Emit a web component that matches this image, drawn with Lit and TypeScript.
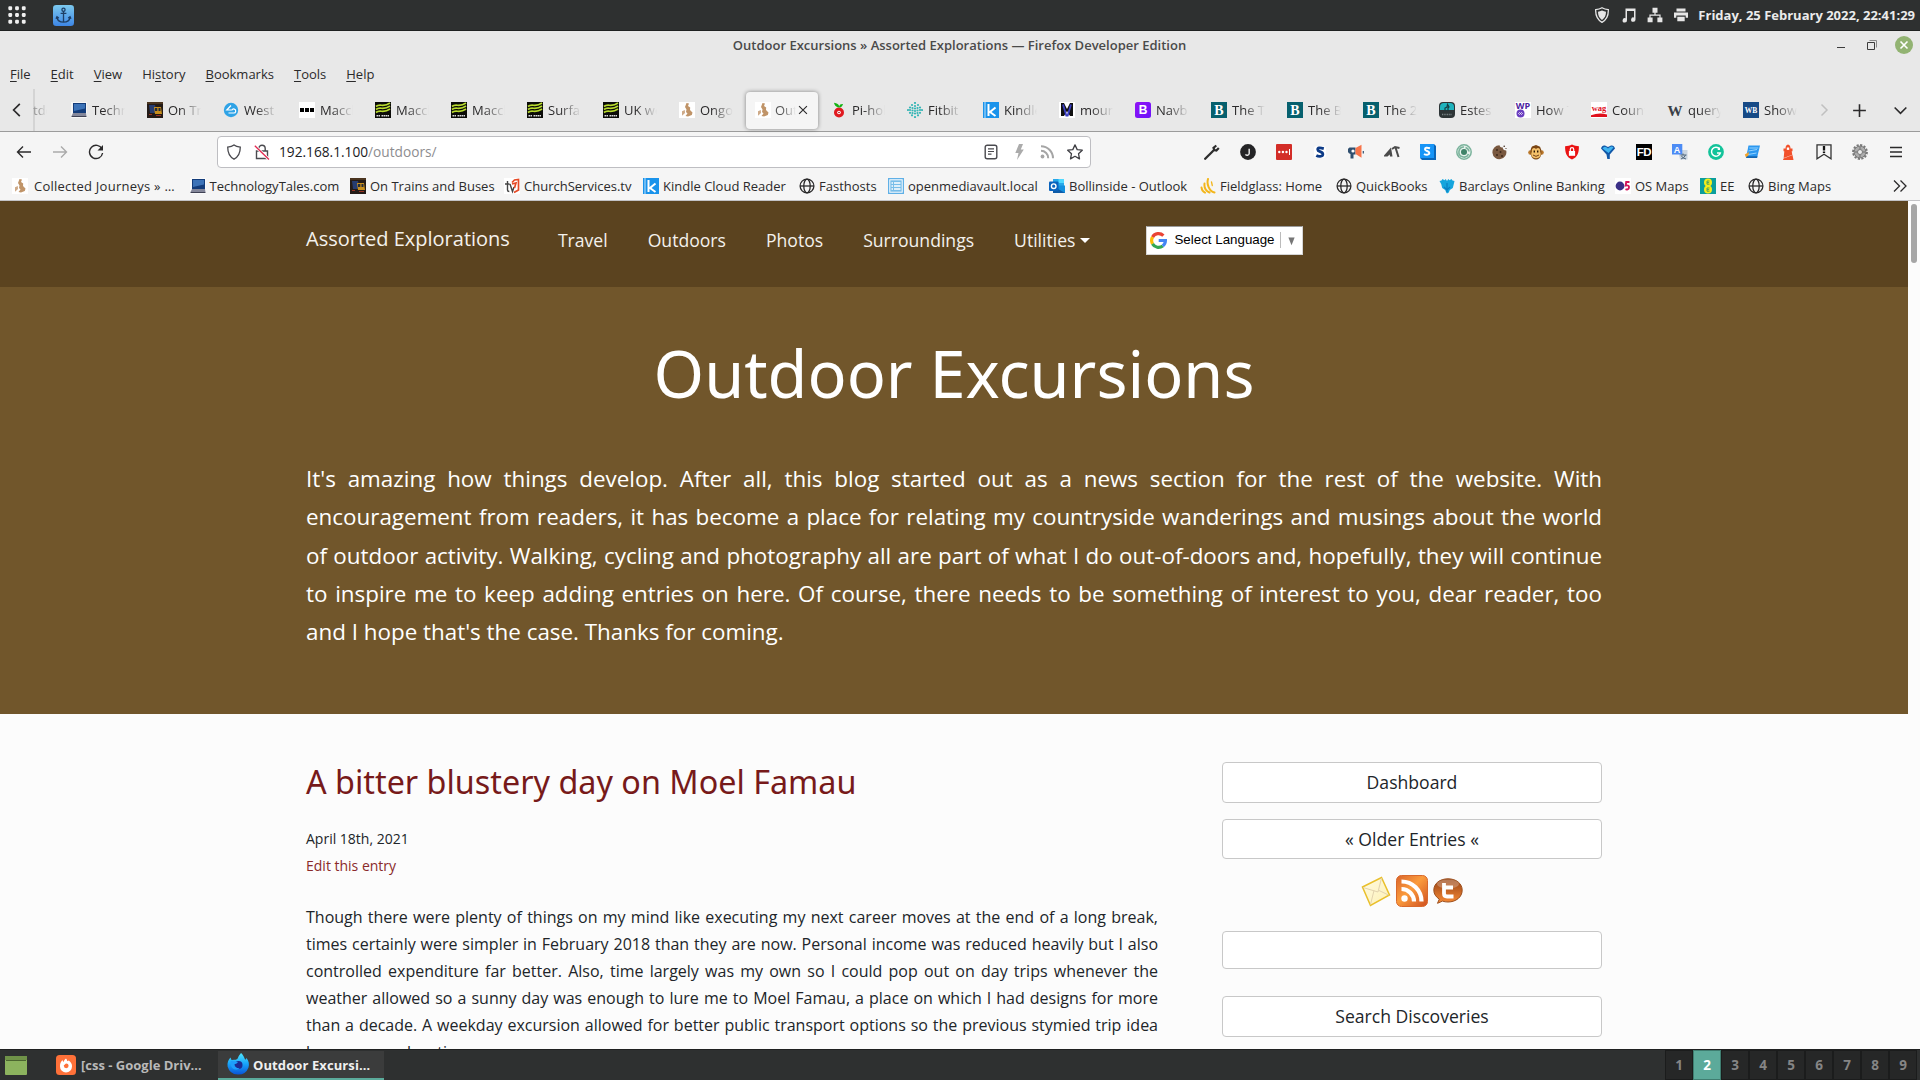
import { LitElement, html, svg, css, TemplateResult, SVGTemplateResult } from "lit";
import { customElement } from "lit/decorators.js";
import { classMap } from "lit/directives/class-map.js";

const GLYPHS: Record<string, SVGTemplateResult> = {
  grid: svg`<g fill="#f0f0f0">${[2, 8, 14].map((y) => [2, 8, 14].map((x) => svg`<rect x=${x - 1.7} y=${y - 1.7} width="3.4" height="3.4" rx="1"/>`))}</g>`,
  anchor: svg`<defs><linearGradient id="a" x2="0" y2="1"><stop stop-color="#7cc9ee"/><stop offset="1" stop-color="#3d86e6"/></linearGradient></defs><rect width="16" height="16" rx="2.5" fill="url(#a)"/><g fill="none" stroke="#1e3f66" stroke-width="1"><circle cx="8" cy="3.6" r="1.2"/><path d="M8 4.8V13M5.8 6.4h4.4M3 9.2C3.3 11.8 5.4 13 8 13s4.700-1.200 5-3.800M2.300 10.500 3 9l1.400 1M13.700 10.500 13 9l-1.400 1"/></g>`,
  sysShield: svg`<path d="M8 .8C10 2 12.500 2.500 14.300 2.600c.3 5.400-1.300 9.900-6.300 12.800C3 12.500 1.400 8 1.700 2.600 3.500 2.500 6 2 8 .8z" fill="none" stroke="#e6e6e6" stroke-width="1.300"/><path d="M8 3.500c1.400.8 2.800 1.100 4 1.200 0 3.600-1.100 6.300-4 8.200-2.900-1.900-4-4.600-4-8.200 1.200-.1 2.600-.4 4-1.200z" fill="#e6e6e6"/>`,
  note: svg`<path d="M4.500 1.500h10v11a2.200 2.200 0 1 1-1.500-2V4H6v9.300a2.200 2.200 0 1 1-1.500-2z" fill="#e6e6e6"/>`,
  network: svg`<path d="M5.500.8h5v5h-5zM.6 10.500h5v4.700h-5zM10.400 10.500h5v4.700h-5z" fill="#e6e6e6"/><path d="M8 5v3.200M3 11V8.200h10V11" fill="none" stroke="#e6e6e6" stroke-width="1.200"/>`,
  printer: svg`<path d="M3.500 1.500h9v3h-9zM1 5.500h14v5.300h-2.300V8.500H3.300v2.300H1zM4.300 9.700h7.400v4.500H4.300z" fill="#e6e6e6"/>`,
  back: svg`<path d="M15 8H1.500M7 2.500 1.500 8 7 13.500" fill="none" stroke="#2b2a2b" stroke-width="1.400"/>`,
  forward: svg`<path d="M1 8h13.500M9 2.500 14.500 8 9 13.500" fill="none" stroke="#aaa" stroke-width="1.400"/>`,
  reload: svg`<path d="M14 5A6.600 6.600 0 1 0 14.600 9" fill="none" stroke="#2b2a2b" stroke-width="1.400"/><path d="M15 1v5.500H9.500z" fill="#2b2a2b"/>`,
  shield: svg`<path d="M8 .9c2 1.500 4 1.900 6.300 2.200C14.300 9 12.500 13 8 15.200 3.500 13 1.700 9 1.700 3.100 4 2.800 6 2.400 8 .9z" fill="none" stroke="#4a4a4f" stroke-width="1.300"/>`,
  lock: svg`<path d="M2.500 7h11v7.500h-11zM4.800 7V4.500a3.200 3.200 0 0 1 6.400 0V7" fill="none" stroke="#4a4a4f" stroke-width="1.400"/><path d="M1 2l14 13.500" stroke="#fff" stroke-width="3"/><path d="M.8 1.800 15 15.500" stroke="#e22850" stroke-width="1.300"/>`,
  reader: svg`<rect x="2.200" y="1.200" width="11.600" height="13.600" rx="2" fill="none" stroke="#4a4a4f" stroke-width="1.400"/><path d="M5 4.800h6M5 7.500h6M5 10.200h3.500" stroke="#4a4a4f" stroke-width="1.200"/>`,
  bolt: svg`<path d="M8 0h4L9.800 5.500h3L6 16l1.500-7H4.300z" fill="#ababab"/>`,
  rss: svg`<circle cx="3.500" cy="12.500" r="1.900" fill="#a5a5a5"/><path d="M2 6.800A7.200 7.200 0 0 1 9.200 14.200M2 2.200A12 12 0 0 1 14 14.200" fill="none" stroke="#a5a5a5" stroke-width="2"/>`,
  star: svg`<path d="M8 .9l2.200 4.700 5.100.6-3.800 3.500 1 5.200L8 12.300l-4.500 2.600 1-5.200L.7 6.200l5.100-.6z" fill="none" stroke="#3f3f44" stroke-width="1.300" stroke-linejoin="round"/>`,
  left: svg`<path d="M10.500 2.500 5 8l5.500 5.500" fill="none" stroke="#2b2a2b" stroke-width="1.500"/>`,
  right: svg`<path d="M5.500 2.500 11 8l-5.500 5.500" fill="none" stroke="#c0c0c0" stroke-width="1.500"/>`,
  plus: svg`<path d="M8 2v12M2 8h12" stroke="#2b2a2b" stroke-width="1.500"/>`,
  down: svg`<path d="M2.500 5.200 8 10.700l5.500-5.500" fill="none" stroke="#2b2a2b" stroke-width="1.500"/>`,
  more: svg`<path d="M2 2.500 7.500 8 2 13.500M8.500 2.500 14 8l-5.500 5.500" fill="none" stroke="#2b2a2b" stroke-width="1.300"/>`,
  close: svg`<path d="M3.500 3.500l9 9M12.500 3.500l-9 9" stroke="#2b2a2b" stroke-width="1.300"/>`,
  menu: svg`<path d="M2 3.500h12M2 8h12M2 12.500h12" stroke="#2b2a2b" stroke-width="1.300"/>`,
  minimize: svg`<path d="M4 10.500h8" stroke="#3c3c3c"/>`,
  restore: svg`<path d="M3.500 5.500h7v7h-7z" fill="none" stroke="#3c3c3c"/><path d="M5.500 3.500h7v7" fill="none" stroke="#8a8a8a"/>`,
  // favicons
  journeys: svg`<rect width="16" height="16" fill="#fff"/><path d="M7.500 1 10 1.500 9 4l2.200 1.500L11 8l2.500 2.500L12.800 13 9 14.500 6.500 14l2-2.500L7 10l.5-2.500L6 5z" fill="#c09468"/><path d="M3 9.200 5.800 8 6 11l-3 2.800z" fill="#ceaa88"/>`,
  laptop: svg`<rect width="16" height="16" fill="#fff" opacity=".6"/><path d="M2 1h13v10H2z" fill="#133c7a"/><path d="M3 2h11v4.500L3 9z" fill="#3c73b8"/><path d="M2 11h13l.5 3H.5z" fill="#84879a"/><path d="M.5 14h15v1H.5z" fill="#3f4254"/>`,
  train: svg`<rect width="16" height="16" fill="#241b17"/><path d="M2 3h6l2 8H3z" fill="#263c70"/><path d="M7 5h7l1 7H8z" fill="#c88f1c"/><path d="M8 6h2.300v3H8zM11.500 6h2v3h-2z" fill="#222b3c"/><path d="M2 12h3v1H2zM9 13h5v1H9z" fill="#932"/><path d="M0 0h16v2H0z" fill="#4b3520"/>`,
  west: svg`<circle cx="8" cy="8" r="7.200" fill="#2fa3e6"/><path d="M8 3.500 3.800 8h5M5.500 11h5.200a2 2 0 1 0-1.800-2.800" fill="none" stroke="#fff" stroke-width="1.200"/>`,
  bbc: svg`<rect width="16" height="16" fill="#fff"/><path d="M1 6h4v4H1zM6 6h4v4H6zM11 6h4v4h-4z" fill="#000"/>`,
  met: svg`<rect width="16" height="16" fill="#0b0b08"/><path d="M1 4.500C5 1 8 6 15 1M1 7.500C5 4 8 9 15 4M1 10.500C5 7 8 12 15 7" fill="none" stroke="#b9dc2e" stroke-width="1.700"/><path d="M1.500 13.800h4M6.500 13.800h8" stroke="#ddd" stroke-width="1.600" stroke-dasharray="1.500 .5"/>`,
  pihole: svg`<circle cx="8" cy="10.500" r="5" fill="#e01a20"/><circle cx="8" cy="10.500" r="1.800" fill="#fff"/><circle cx="8" cy="10.500" r=".8" fill="#900"/><path d="M8 5.500C4.500 5 3.500 3 3 .8 6 1 8 2.500 8.200 4.500 8.500 2.500 10 1.800 12 2c-.5 2-1.500 3.300-4 3.500z" fill="#12b212"/>`,
  fitbit: svg`<g fill="#35b5b5">${[[8, 1], [5, 3], [8, 4], [11, 3], [3, 5.500], [5.500, 6], [8, 6.500], [10.500, 6], [13, 5.500], [1, 8], [3, 8], [5.500, 8.500], [8, 9], [10.500, 8.500], [13, 8], [15, 8], [3, 10.800], [5.500, 11], [8, 11.500], [10.500, 11], [13, 10.800], [5, 13.300], [8, 15], [11, 13.300]].map(([x, y]) => svg`<circle cx=${x} cy=${y} r="1.100"/>`)}</g>`,
  kindle: svg`<rect width="16" height="16" fill="#1a93eb"/><path d="M2 0v16" stroke="#bfe2fb"/><path d="M5.500 2v12M12.500 5.500 7 10l5.500 4" fill="none" stroke="#fff" stroke-width="2"/>`,
  mountain: svg`<rect width="16" height="16" fill="#fff"/><path d="M2 1h3l3 6 3-6h3v13h-3L8 9l-3 5H2z" fill="#111"/><path d="M4 2.500 7.300 13.500h1.400L12 2.500" fill="none" stroke="#3a3fc4" stroke-width="1.800"/>`,
  bootstrap: svg`<defs><linearGradient id="b" x2="1" y2="1"><stop stop-color="#9013f5"/><stop offset="1" stop-color="#6b12fa"/></linearGradient></defs><rect width="16" height="16" rx="2.500" fill="url(#b)"/><text x="8" y="12.300" class="g">B</text>`,
  bteal: svg`<rect width="16" height="16" fill="#06606e"/><text x="8" y="13.200" class="s">B</text>`,
  estes: svg`<rect width="16" height="16" rx="4" fill="#2d3436"/><path d="M1 8V5q0-4 4-4h6q4 0 4 4v3z" fill="#1fb3bd"/><path d="M6 9V6l2-1 .5-2.500L10 5l-1 1v3" fill="none" stroke="#173b40" stroke-width="1.200"/><path d="M3 12.500h10" stroke="#7b8688" stroke-width="1.500" stroke-dasharray="1 .7"/>`,
  wp: svg`<rect width="16" height="16" fill="#fff"/><text x="8" y="7.200" class="w">WP</text><circle cx="5.500" cy="11.500" r="4" fill="#6b3fc0"/><path d="M3.500 11.500q1-2 2 0t2 0q-1-2-2 0t-2 0" fill="none" stroke="#fff" stroke-width=".8"/>`,
  wag: svg`<rect width="16" height="16" fill="#fff"/><text x="8" y="9" class="wag">wag</text><path d="M0 13.200q8-3 16-.8V15H0z" fill="#e0101c"/>`,
  wiki: svg`<text x="8" y="13.500" class="wiki">W</text>`,
  w3: svg`<rect width="16" height="16" fill="#164a86"/><text x="8" y="10.500" class="w3">WB</text>`,
  church: svg`<rect width="16" height="16" fill="#fff"/><path d="M3.500 3v9q0 1.500 1.800 1.500M1 6h4.500M6 6l2.500 7.500L10 9" fill="none" stroke="#444" stroke-width="1.400"/><path d="M8 4.500 10.500 2 14.500 1.500V12L10 14.500M8 6l4-1-1.500 5" fill="none" stroke="#e64a26" stroke-width="1.700"/>`,
  globe: svg`<g fill="none" stroke="#2b2a2b" stroke-width="1.300"><circle cx="8" cy="8" r="6.900"/><ellipse cx="8" cy="8" rx="3.200" ry="6.900"/><path d="M1.100 8h13.800"/></g>`,
  omv: svg`<rect width="16" height="16" fill="#60b0e6"/><rect x="1.800" y="1.800" width="12.400" height="12.400" fill="#78bde9" stroke="#fff"/><path d="M3.500 5h1.500M3.500 8h1.500M3.500 11h1.500M6 5h6.500M6 8h6.500M6 11h6.500" stroke="#fff" stroke-width="1.400"/>`,
  outlook: svg`<path d="M4 1h11v7H4z" fill="#28a8ea"/><path d="M9.500 1H15v4H9.500z" fill="#50d9ff"/><path d="M4 7.500h12V15H4z" fill="#1490df"/><path d="M4 8l12 7H4z" fill="#0f5ca8"/><rect y="3.500" width="9.500" height="9.500" rx="1" fill="#0a63bd"/><circle cx="4.700" cy="8.200" r="2.300" fill="none" stroke="#fff" stroke-width="1.400"/>`,
  field: svg`<g fill="none" stroke="#f3b61b" stroke-width="2" stroke-linecap="round"><path d="M8 1C6.500 6 9 13 14.500 14.500M4.500 5.500C4 10 6 13 9.500 14.500M1.500 9.500C1.800 12 3 13.800 5 14.600"/><path d="M11.500 4l.8 3.500" stroke-width="1.300"/></g>`,
  barclays: svg`<path d="M8 3 9.300 1l1.200 1.200L12.500 1l1 1.500 2 .5-.7 3-1 4-3 2-1 2.500L8 15.500 7.200 14.500l-1-2.500-3-2-1-4L.5 3l2-.5 1-1.500 2 1.200L6.700 1z" fill="#15a5dd"/><path d="M8 5v9M5 9l3 3 3-3" fill="none" stroke="#0b7fc1" stroke-width="1.200"/>`,
  os: svg`<rect width="16" height="16" fill="#fff"/><circle cx="5" cy="8" r="4.400" fill="#3a2f86"/><path d="M14.500 4h-3.300l-.5 3.500c3-.6 3.600.8 3.200 2.400-.4 1.500-2 2-3.400 1.300" fill="none" stroke="#d4145a" stroke-width="1.900"/>`,
  ee: svg`<rect width="16" height="16" fill="#0a9e9c"/><circle cx="8" cy="4.500" r="4" fill="#f5ec1a"/><circle cx="8" cy="11.500" r="4" fill="#f5ec1a"/><path d="M9.500 3H7v3.200h2.500M7 4.600h2.200M9.500 10H7v3.200h2.500M7 11.600h2.200" fill="none" stroke="#3d9c65" stroke-width=".9"/>`,
  // extensions
  wrench: svg`<path d="M1.200 14.800 9.500 6.500" stroke="#2d2d2d" stroke-width="2.300" stroke-linecap="round"/><path d="M12.300 1.500 9.500 3.800 10.300 6 12.400 6.500 14.800 4" fill="none" stroke="#2d2d2d" stroke-width="2.200"/>`,
  jay: svg`<circle cx="8" cy="8" r="7.900" fill="#242426"/><path d="M9.200 4.800v4.700a2 2 0 0 1-3.700.8" fill="none" stroke="#e5e5e5" stroke-width="1.500"/>`,
  dots: svg`<rect width="16" height="16" rx="1" fill="#d32d27"/><circle cx="3.300" cy="8" r="1.200" fill="#fff"/><circle cx="6.900" cy="8" r="1.200" fill="#fff"/><circle cx="10.500" cy="8" r="1.200" fill="#fff"/><path d="M13.500 5v6" stroke="#fff"/>`,
  sblue: svg`<rect x="2" y="2" width="12" height="12" rx="3" fill="#fff"/><path d="M11.800 4.600Q5.600 2.800 5.700 5.600C5.800 8.200 10.900 7 10.900 10.300 10.900 13 6 12.500 4.300 11.500" fill="none" stroke="#0c3a86" stroke-width="2.700"/>`,
  mega: svg`<path d="M1.500 3.500h6v7h-2v4h-3v-4.500A3.500 3.500 0 0 1 1.500 3.500z" fill="#2f4f6f"/><path d="M7.500 4 13.500.8v13L7.500 10z" fill="#f8744a"/><circle cx="5" cy="7" r="1.600" fill="#fff"/><path d="M15.300 7v2.500" stroke="#2f4f6f" stroke-width="1.200"/>`,
  at: svg`<path d="M0 11.500 7 3.500l1.500 9H6l-.3-2-2.200 2H0z" fill="#4b4b4b"/><path d="M8 5 11 3l4.500 1M11.500 3.500l3 9.500" fill="none" stroke="#4b4b4b" stroke-width="2"/>`,
  stylus: svg`<path d="M0 0h14l2 2v14H2l-2-2z" fill="#0b66b8"/><path d="M0 0h14v14H0z" fill="#1795f7"/><path d="M10 4.200Q5 2.700 5 5.200C5 7.500 9.300 6.500 9.300 9.100 9.300 11.200 5.600 11 4 10" fill="none" stroke="#fff" stroke-width="2"/>`,
  cycle: svg`<circle cx="8" cy="8" r="7.200" fill="#e8f2ed" stroke="#7bb39c" stroke-width="1.500"/><circle cx="8" cy="8" r="3" fill="#3f8368"/><path d="M8 3a5 5 0 1 0 4.500 7M9.500 3.400A5 5 0 0 1 13 7.500" fill="none" stroke="#7bb39c" stroke-width="1.600"/>`,
  cookie: svg`<path d="M7.500 1.200c.5 2 2 2.500 3.200 2 .1 2.200 1.400 3.200 3.500 3.300A7 7 0 1 1 7.500 1.200z" fill="#79583f"/><g fill="#3f2a1c"><circle cx="5" cy="6" r="1"/><circle cx="8.500" cy="8" r="1"/><circle cx="5" cy="11" r="1"/><circle cx="10" cy="12" r="1"/><circle cx="12.200" cy="2.300" r=".8"/><circle cx="14" cy="4.500" r=".6"/></g>`,
  monkey: svg`<circle cx="2.400" cy="8.500" r="2.200" fill="#b9772a"/><circle cx="13.600" cy="8.500" r="2.200" fill="#b9772a"/><path d="M8 1l4 1.700q2 3 1.300 7.500Q12 15.500 8 15.500t-5.300-5.300Q2 5 4 2.500z" fill="#7a4513"/><path d="M8 5c2-2 4.700-.5 4.200 2.800 1.800 4-1 6.500-4.200 6.500s-6-2.500-4.200-6.500C3.300 4.500 6 3 8 5z" fill="#f3c06a"/><path d="M6.300 6.500v2M9.700 6.500v2" stroke="#2b1605" stroke-width="1.400"/><path d="M5 11q3 2.700 6 0" fill="none" stroke="#74401a"/>`,
  redshield: svg`<path d="M8 .5c2 1.200 4.600 1.700 6.900 1.700C15 9 13.500 13 8 15.600 2.500 13 1 9 1.100 2.200 3.400 2.200 6 1.700 8 .5z" fill="#ea1313"/><path d="M4.900 7h6.200v4.800H4.900z" fill="#fff"/><path d="M6.300 7V5.300a1.700 1.700 0 0 1 3.400 0V7" fill="none" stroke="#fff" stroke-width="1.200"/>`,
  funnel: svg`<path d="M1 4.500Q2 .8 5 1.500L8 3l3-1.500q3-.7 4 3L9.800 10.500V15H7.300L6.500 10.500z" fill="#1258a8"/><path d="M2.500 4.500Q4 2 6 3l2 1.500L10 3q2-1 3.500.5L8.500 9z" fill="#3fb4f0"/>`,
  fd: svg`<rect width="16" height="16" fill="#000"/><text x="8" y="12.400" class="fd">FD</text>`,
  translate: svg`<path d="M6 6h9.500v9.500H8z" fill="#c9d4df"/><rect width="10.300" height="10.500" fill="#4d8cf5"/><text x="5" y="8.500" class="a">A</text><path d="M8.500 11h6M11 9.500V11M13.500 11q-1 3-4.500 4M9.500 12q1 2.300 4.500 3" fill="none" stroke="#51677d"/>`,
  grammar: svg`<circle cx="8" cy="8" r="7.900" fill="#13c39a"/><path d="M11.600 5A4.500 4.500 0 1 0 12.300 9H9" fill="none" stroke="#fff" stroke-width="1.500"/><path d="M12 3v3H9.300z" fill="#fff"/>`,
  book: svg`<path d="M4.500 1.500H16L13 14H2z" fill="#2c98f0"/><path d="M5.300 4h9M4.500 7l8.500-1.500M4 10.500 12.500 9" stroke="#94d3ff"/><path d="M.8 10.500 5 8l-.8 4-2 2z" fill="#f4a32a"/><path d="M2 14h11l.5-1.800H3z" fill="#1366b2"/>`,
  light: svg`<path d="M5.500 4.500Q5.500 1 8 .4q2.500.6 2.500 4.100h2v2.800H3.500V4.500zM4.300 7.300h7.400l.6 3.500-8.600 3.200zM3.500 14.600l9-3.600 1 5H3z" fill="#f2502a"/><rect x="6.800" y="3.500" width="2.400" height="2.400" fill="#fff"/>`,
  flag: svg`<path d="M1 .8h14v14l-7-4.500-7 4.500z" fill="none" stroke="#333" stroke-width="1.300"/><path d="M8 2v4.500M8 7.500V9" stroke="#111" stroke-width="2.300"/>`,
  gear: svg`<circle cx="8" cy="8" r="6.900" fill="none" stroke="#777" stroke-width="2" stroke-dasharray="2.200 1.400"/><circle cx="8" cy="8" r="5.900" fill="#adadad" stroke="#777"/><circle cx="8" cy="8" r="2.500" fill="#ededed" stroke="#777"/><g fill="#666"><circle cx="8" cy="4" r=".8"/><circle cx="8" cy="12" r=".8"/><circle cx="4" cy="8" r=".8"/><circle cx="12" cy="8" r=".8"/></g>`,
  google: svg`<g fill="none" stroke-width="3"><path d="M12.600 3.400A6.500 6.500 0 0 0 2.400 4.800" stroke="#ea4335"/><path d="M2.400 4.800A6.500 6.500 0 0 0 2.400 11.200" stroke="#fbbc05"/><path d="M2.400 11.200A6.500 6.500 0 0 0 12 13.100" stroke="#34a853"/><path d="M12 13.100A6.500 6.500 0 0 0 14.500 8H8.200" stroke="#4285f4"/></g>`,
  files: svg`<rect width="22" height="19" rx="1" fill="#8cb35e"/><path d="M0 0h22v4H0z" fill="#6f9248"/><path d="M1 4.500h20" stroke="#4c6630"/>`,
  firefoxTile: svg`<rect width="20" height="20" rx="3.500" fill="#ff7139"/><path d="M10 3.500c.8 1 1.200 1.700 1.300 2.800l1.500-.8c2 1.500 3.500 3.500 3.200 6A6 6 0 0 1 4 11.500C3.900 9 4.600 7 6.500 5c.2 1 .6 1.500 1.300 2C7.800 5.500 8.800 4.500 10 3.500z" fill="#fff"/><circle cx="10.200" cy="10.800" r="2.400" fill="#ff7139"/><path d="M6.500 8.500 10 8 8.500 10z" fill="#fff"/>`,
  firefox: svg`<defs><linearGradient id="f" x2="0" y2="1"><stop stop-color="#4fe6fb"/><stop offset=".5" stop-color="#17a4fb"/><stop offset="1" stop-color="#0a54d8"/></linearGradient></defs><path d="M14 0c3.500 3 3 5.500 4.500 6.800l1-1.800c2.300 3 3 6 2 9.500A11 11 0 0 1 .6 13.500C0 9.500 1.500 6.500 3.500 4.500L4.500 7l3-.2c1.800 0 3-.5 3.500-2C11.500 3 12.800 1.500 14 0z" fill="url(#f)"/><circle cx="11.500" cy="12" r="4" fill="#1c2c92"/><path d="M3.500 8c2.500-.8 5 0 7.500 1-1 1.800-2.500 2-4 2.200C8 14 10 15.500 12.500 15c-3.500 3-7.500 1-8.500-2z" fill="#1e9ffb"/>`,
  mail: svg`<defs><linearGradient id="m" x2="1" y2="1"><stop stop-color="#fffbe2"/><stop offset="1" stop-color="#fdf0b4"/></linearGradient></defs><path d="M1.500 11 20.500 1.500 28.500 19 9.500 29.500z" fill="url(#m)" stroke="#e9bf2b" stroke-width="1.500"/><path d="M2 11.500l15 4.500L20.500 2M9.500 28.500l3.500-14M27.500 19 18 14.500" fill="none" stroke="#e3d3ae"/>`,
  rssBig: svg`<defs><linearGradient id="r" x2="1" y2="1"><stop stop-color="#d9642c"/><stop offset=".45" stop-color="#fb9c3d"/><stop offset="1" stop-color="#cf4f20"/></linearGradient></defs><rect x=".5" y=".5" width="31" height="31" rx="5" fill="url(#r)" stroke="#d9692c"/><circle cx="8.500" cy="23.500" r="3.200" fill="#fff"/><path d="M5.500 14A12.500 12.500 0 0 1 18 26.500M5.500 6.500A20 20 0 0 1 25.500 26.500" fill="none" stroke="#fff" stroke-width="4.200"/>`,
  tweet: svg`<defs><linearGradient id="t" x2="0" y2="1"><stop stop-color="#9a4a1c"/><stop offset=".35" stop-color="#b75a20"/><stop offset="1" stop-color="#f98c36"/></linearGradient></defs><path d="M15 .8c8 0 14.200 4.600 14.200 11.400S23 24 15 24c-2 0-4-.3-5.500-.9L4.500 25.300l1.800-4.200C3 19 .8 16 .8 12.200.8 5.400 7 .8 15 .8z" fill="url(#t)" stroke="#9c4e1c"/><ellipse cx="15" cy="6" rx="11" ry="4.600" fill="#fff" opacity=".25"/><path d="M11 5v10.500q0 3 3 3h6.500M10 9.500h10" fill="none" stroke="#fff" stroke-width="3.800" stroke-linejoin="round"/>`,
};

const icon = (name: string, w = 16, h = w, vw = 16, vh = vw): TemplateResult =>
  html`<svg class="icon" width=${w} height=${h} viewBox="0 0 ${vw} ${vh}">${GLYPHS[name]}</svg>`;

const TABS: [string, string][] = [
  ["laptop", "Techn"], ["train", "On Tra"], ["west", "West"], ["bbc", "Maccl"], ["met", "Maccl"], ["met", "Maccl"],
  ["met", "Surfa"], ["met", "UK we"], ["journeys", "Ongo"], ["journeys", "Out"], ["pihole", "Pi-hol"], ["fitbit", "Fitbit"],
  ["kindle", "Kindle"], ["mountain", "moun"], ["bootstrap", "Navb"], ["bteal", "The T"], ["bteal", "The B"], ["bteal", "The 2"],
  ["estes", "Estes"], ["wp", "How T"], ["wag", "Count"], ["wiki", "query"], ["w3", "Show"],
];

const BOOKMARKS: [string, string][] = [
  ["journeys", "Collected Journeys » …"], ["laptop", "TechnologyTales.com"], ["train", "On Trains and Buses"], ["church", "ChurchServices.tv"],
  ["kindle", "Kindle Cloud Reader"], ["globe", "Fasthosts"], ["omv", "openmediavault.local"], ["outlook", "Bollinside - Outlook"],
  ["field", "Fieldglass: Home"], ["globe", "QuickBooks"], ["barclays", "Barclays Online Banking"], ["os", "OS Maps"], ["ee", "EE"], ["globe", "Bing Maps"],
];

const EXTENSIONS = ["wrench", "jay", "dots", "sblue", "mega", "at", "stylus", "cycle", "cookie", "monkey", "redshield", "funnel", "fd", "translate", "grammar", "book", "light", "flag", "gear", "menu"];

const shared = css`
  :host, * { box-sizing: border-box; }
  .icon { display: block; flex: none; }
  .g, .s, .w, .wag, .wiki, .w3, .fd, .a { text-anchor: middle; font-weight: 700; fill: #fff; }
  .g { font: 700 12px "Liberation Sans", sans-serif; }
  .s { font: 700 14px "Liberation Serif", serif; }
  .w { font: 700 9px "Open Sans", sans-serif; fill: #4a22a0; }
  .wag { font: 700 8.500px "Liberation Serif", serif; fill: #e0101c; }
  .wiki { font: 700 15px "Liberation Serif", serif; fill: #3a3f47; }
  .w3 { font: 700 7.500px "Liberation Serif", serif; }
  .fd { font: 700 11.500px "Liberation Sans", sans-serif; letter-spacing: -.5px; }
  .a { font: 700 9px "Liberation Sans", sans-serif; }
`;

@customElement("desktop-panel")
class DesktopPanel extends LitElement {
  static styles = [shared, css`
    :host { display: flex; align-items: center; height: 31px; background: #2e3030; border-bottom: 1px solid #1f2121; padding: 0 5px 0 8px; }
    .apps { margin-right: 27px; }
    .tray { display: flex; gap: 10.300px; margin-left: auto; margin-right: 9px; }
    .clock { font: 700 13px/30px "Open Sans", sans-serif; color: #ebebeb; }
  `];
  render() {
    return html`<div class="apps">${icon("grid", 18, 18, 16)}</div>${icon("anchor", 21)}
      <div class="tray">${["sysShield", "note", "network", "printer"].map((n) => icon(n))}</div>
      <div class="clock">Friday, 25 February 2022, 22:41:29</div>`;
  }
}

@customElement("browser-chrome")
class BrowserChrome extends LitElement {
  static styles = [shared, css`
    :host { display: block; background: #e8e8e8; color: #2b2a2b; font: 13px "Open Sans", sans-serif; }
    .title { display: grid; grid-template-columns: 1fr auto 1fr; align-items: center; height: 28px; padding: 0 7px 0 6px; }
    .name { grid-column: 2; font-weight: 600; font-size: 13px; color: #4a4a4a; white-space: nowrap; }
    .controls { display: flex; align-items: center; justify-content: flex-end; gap: 15px; }
    .shut { width: 18px; height: 18px; border-radius: 50%; background: #92b372; display: grid; place-items: center; }
    .menus { display: flex; gap: 20px; height: 30px; align-items: center; padding-left: 10px; }
    .menus u { text-underline-offset: 2px; text-decoration-thickness: 1px; }
    .tabs { display: flex; height: 43px; align-items: center; border-bottom: 1px solid #9c9c9c; white-space: nowrap; }
    .scroll { width: 33px; padding-left: 8px; }
    .stub { width: 27px; height: 42px; display: flex; align-items: center; border-left: 2px solid #d4d4d4; }
    .stub span { width: 14px; overflow: hidden; color: #999; margin-left: -2px; mask-image: linear-gradient(90deg, #000 40%, transparent); }
    .tab { width: 76px; height: 37px; padding: 0 9px; border: 2px solid transparent; background-clip: padding-box; display: flex; align-items: center; gap: 5px; }
    .tab .label { width: 33px; flex: none; overflow: hidden; line-height: 20px; mask-image: linear-gradient(90deg, #000 35%, transparent); }
    .tab.on { width: 72px; margin: 0 2px; border: 0; padding: 0 5px 0 9px; border-radius: 4px; background: #f5f5f5; box-shadow: 0 0 4px rgba(0, 0, 0, .45); gap: 4px; }
    .tab.on .label { width: 21px; color: #555; margin-right: -4px; }
    .next { width: 35px; margin-left: 8px; }
    .add { width: 41px; }
    .bar { display: flex; align-items: center; height: 40px; background: #f5f5f5; padding: 0 16px; }
    .nav { display: flex; gap: 20px; width: 201px; }
    .url { width: 874px; height: 32px; border: 1px solid #bebec2; border-radius: 4px; background: #fff; display: flex; align-items: center; gap: 12px; padding: 0 7px 0 8px; }
    .address { font-size: 13.700px; line-height: 20px; color: #8d8d90; margin-left: -3px; flex: 1; }
    .address b { font-weight: 400; color: #202023; }
    .ext { display: flex; gap: 20px; margin-left: auto; }
    .marks { display: grid; grid-template-columns: 177.500px 160.500px 154px 139px 156px 89px 161px 151px 136px 103px 176px 85px 48px 143.500px 16px; padding-left: 12px; height: 28px; align-items: center; background: #f5f5f5; }
    .mark { display: flex; align-items: center; gap: 4px; white-space: nowrap; line-height: 20px; }
    .mark:first-child { gap: 6px; letter-spacing: .25px; }
    .end { height: 1px; background: #c3c3c6; }
  `];
  render() {
    return html`
      <div class="title"><div class="name">Outdoor Excursions » Assorted Explorations — Firefox Developer Edition</div>
        <div class="controls">${icon("minimize")}${icon("restore")}<div class="shut"><svg width="10" height="10" viewBox="0 0 10 10"><path d="M1.500 1.500l7 7M8.500 1.500l-7 7" stroke="#fff" stroke-width="1.600"/></svg></div></div></div>
      <div class="menus"><span><u>F</u>ile</span><span><u>E</u>dit</span><span><u>V</u>iew</span><span>Hi<u>s</u>tory</span><span><u>B</u>ookmarks</span><span><u>T</u>ools</span><span><u>H</u>elp</span></div>
      <div class="tabs"><div class="scroll">${icon("left", 18)}</div><div class="stub"><span>tdoo</span></div>
        ${TABS.map(([i, t], n) => html`<div class=${classMap({ tab: true, on: n === 9 })}>${icon(i)}<span class="label">${t}</span>${n === 9 ? icon("close", 14) : ""}</div>`)}
        <div class="next">${icon("right")}</div><div class="add">${icon("plus", 17)}</div>${icon("down", 17)}</div>
      <div class="bar"><div class="nav">${icon("back")}${icon("forward")}${icon("reload")}</div>
        <div class="url">${icon("shield")}${icon("lock")}<div class="address"><b>192.168.1.100</b>/outdoors/</div>${["reader", "bolt", "rss", "star"].map((n) => icon(n))}</div>
        <div class="ext">${EXTENSIONS.map((n) => icon(n))}</div></div>
      <div class="marks">${BOOKMARKS.map(([i, t]) => html`<div class="mark">${icon(i)}<span>${t}</span></div>`)}${icon("more")}</div>
      <div class="end"></div>`;
  }
}

@customElement("blog-page")
class BlogPage extends LitElement {
  static styles = [shared, css`
    :host { display: flex; height: 848px; overflow: hidden; background: #fcfcfc; font: 16px/27px "Open Sans", sans-serif; color: #212529; }
    .page { width: 1908px; }
    .wrap { width: 1296px; margin: 0 auto; }
    .top { background: #5b431f; height: 86px; }
    .top .wrap { display: flex; align-items: center; height: 78px; color: #f4f1ec; font-size: 17.600px; gap: 40px; }
    .brand { font-size: 20px; margin-right: 8px; margin-top: -4px; }
    .drop { display: flex; align-items: center; gap: 5px; }
    .caret { border: 5px solid transparent; border-top-color: #fff; border-bottom: 0; }
    .lang { display: flex; align-items: center; width: 157px; height: 29px; margin-left: 16px; background: #fff; border: 1px solid #d5d5d5; border-top-color: #9b9b9b; padding: 0 7px 0 3px; font: 13.330px "Liberation Sans", sans-serif; color: #000; }
    .lang .text { margin-left: 7px; border-right: 1px solid #bbb; padding-right: 5px; line-height: 16px; white-space: nowrap; }
    .tri { color: #767676; margin-left: 4px; font-size: 13.330px; transform: scaleX(.8); }
    .hero { background: #71562b; height: 427px; color: #fff; padding-top: 47px; }
    h1 { margin: 0; text-align: center; font: 400 64.800px/78px "Noto Sans", sans-serif; }
    .lead { margin: 48px 0 0; font-size: 22.400px; line-height: 38.250px; text-align: justify; }
    .cols { display: grid; grid-template-columns: 852px 380px; gap: 64px; }
    article { padding-top: 47px; }
    h2 { margin: 0 0 24px; font: 400 32.350px/40px "Noto Sans", sans-serif; color: #771a1a; }
    .meta { font-size: 14px; }
    .edit { color: #8a2a2a; }
    article p { margin: 25px 0 0; text-align: justify; }
    aside { padding-top: 48px; display: flex; flex-direction: column; font-size: 17.600px; text-align: center; }
    .box { background: #fff; border: 1px solid #c8c8c8; border-radius: 4px; height: 41px; line-height: 38px; margin-bottom: 16px; }
    .older { height: 40px; }
    .blank { height: 38px; margin-bottom: 27px; }
    .feeds { display: flex; justify-content: center; gap: 5px; align-items: center; height: 32px; margin-bottom: 24px; }
    .track { width: 12px; background: #fcfcfc; padding: 3px 3px 0; }
    .thumb { width: 6px; height: 59px; border-radius: 3px; background: #a6a6a6; }
  `];
  render() {
    return html`<div class="page">
      <nav class="top"><div class="wrap"><span class="brand">Assorted Explorations</span><span>Travel</span><span>Outdoors</span><span>Photos</span><span>Surroundings</span>
        <span class="drop">Utilities<i class="caret"></i></span>
        <div class="lang">${icon("google", 17)}<span class="text">Select Language</span><span class="tri">▼</span></div></div></nav>
      <header class="hero"><div class="wrap"><h1>Outdoor Excursions</h1>
        <p class="lead">It's amazing how things develop. After all, this blog started out as a news section for the rest of the website. With encouragement from readers, it has become a place for relating my countryside wanderings and musings about the world of outdoor activity. Walking, cycling and photography all are part of what I do out-of-doors and, hopefully, they will continue to inspire me to keep adding entries on here. Of course, there needs to be something of interest to you, dear reader, too and I hope that's the case. Thanks for coming.</p></div></header>
      <div class="wrap cols"><article><h2>A bitter blustery day on Moel Famau</h2>
        <div class="meta">April 18th, 2021</div><div class="meta edit">Edit this entry</div>
        <p>Though there were plenty of things on my mind like executing my next career moves at the end of a long break, times certainly were simpler in February 2018 than they are now. Personal income was reduced heavily but I also controlled expenditure far better. Also, time largely was my own so I could pop out on day trips whenever the weather allowed so a sunny day was enough to lure me to Moel Famau, a place on which I had designs for more than a decade. A weekday excursion allowed for better public transport options so the previous stymied trip idea became an education.</p></article>
        <aside><div class="box">Dashboard</div><div class="box older">« Older Entries «</div>
          <div class="feeds">${icon("mail", 30, 31, 30, 31)}${icon("rssBig", 32, 32, 32)}${icon("tweet", 30, 26, 30, 26)}</div>
          <div class="box blank"></div><div class="box">Search Discoveries</div></aside></div>
    </div><div class="track"><div class="thumb"></div></div>`;
  }
}

@customElement("task-bar")
class TaskBar extends LitElement {
  static styles = [shared, css`
    :host { display: flex; align-items: center; height: 31px; background: #2e3030; border-top: 1px solid #1f2121; padding: 0 3px 0 5px; font: 700 13px/28px "Open Sans", sans-serif; color: #b9b9b9; }
    .task { display: flex; align-items: center; height: 29px; gap: 4px; padding-left: 9px; align-self: flex-end; border-bottom: 2px solid transparent; white-space: nowrap; }
    .first { margin-left: 19px; width: 172px; gap: 5px; padding-left: 10px; }
    .active { background: #3b3c3c; border-color: #5bab9b; color: #f0f0f0; width: 166px; gap: 3px; letter-spacing: .1px; }
    .spaces { display: flex; margin-left: auto; height: 30px; }
    .space { width: 28px; background: #262727; border: 1px solid #1b1c1c; text-align: center; color: #858585; line-height: 29px; font-size: 13.500px; }
    .here { background: #5caa9a; color: #fff; border-color: #3f7d70; }
  `];
  render() {
    return html`${icon("files", 22, 19, 22, 19)}
      <div class="task first">${icon("firefoxTile", 20, 20, 20)}<span>[css - Google Driv…</span></div>
      <div class="task active">${icon("firefox", 23, 24, 23, 24)}<span>Outdoor Excursi…</span></div>
      <div class="spaces">${[1, 2, 3, 4, 5, 6, 7, 8, 9].map((n) => html`<div class=${classMap({ space: true, here: n === 2 })}>${n}</div>`)}</div>`;
  }
}

@customElement("app-root")
class AppRoot extends LitElement {
  static styles = css`
    :host { display: block; width: 1920px; height: 1080px; overflow: hidden; }
  `;
  render() {
    return html`<desktop-panel></desktop-panel><browser-chrome></browser-chrome><blog-page></blog-page><task-bar></task-bar>`;
  }
}
